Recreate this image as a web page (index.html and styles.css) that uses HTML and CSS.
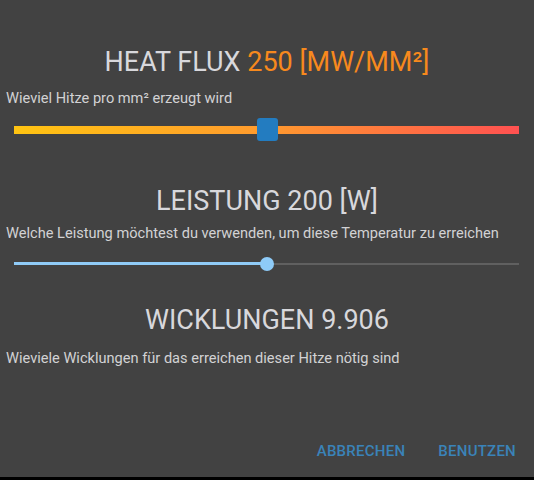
FILE: index.html
```
<!DOCTYPE html>
<html>
<head>
  <meta charset="UTF-8">
  <title>Spule berechnen</title>
  <link rel="stylesheet" href="styles.css">
</head>
<body>
  <div class="dialog">
    <div class="field field-flux">
      <h2 class="field-title">HEAT FLUX <span class="accent">250 [MW/MM²]</span></h2>
      <p class="field-hint">Wieviel Hitze pro mm² erzeugt wird</p>
      <div class="slider slider-heat">
        <div class="slider-track"></div>
        <div class="slider-thumb" style="left: 50%"></div>
      </div>
    </div>

    <div class="field field-power">
      <h2 class="field-title">LEISTUNG 200 [W]</h2>
      <p class="field-hint">Welche Leistung möchtest du verwenden, um diese Temperatur zu erreichen</p>
      <div class="slider slider-line">
        <div class="slider-track"></div>
        <div class="slider-fill" style="width: 50%"></div>
        <div class="slider-thumb" style="left: 50%"></div>
      </div>
    </div>

    <div class="field field-coils">
      <h2 class="field-title">WICKLUNGEN 9.906</h2>
      <p class="field-hint">Wieviele Wicklungen für das erreichen dieser Hitze nötig sind</p>
    </div>

    <div class="actions">
      <button class="action">ABBRECHEN</button>
      <button class="action">BENUTZEN</button>
    </div>
  </div>
</body>
</html>
```

FILE: styles.css
```
body {
  margin: 0;
  background-color: #000;
  font-family: Roboto, "Liberation Sans", sans-serif;
}
.dialog {
  display: flex;
  flex-direction: column;
  height: 477px;
  box-sizing: border-box;
  padding: 46px 0 16px;
  background-color: #424242;
}
.field-title {
  margin: 0;
  font-size: 27px;
  font-weight: 400;
  line-height: 32px;
  text-align: center;
  color: #d8d8dc;
}
.field-title .accent {
  color: #f7891d;
}
.field-hint {
  margin: 10px 0 0;
  padding-left: 6px;
  font-size: 14.6px;
  line-height: 20px;
  color: #d2d2d4;
}
.field-power {
  margin-top: 44px;
}
.field-power .field-hint {
  margin-top: 6px;
}
.field-coils {
  margin-top: 33px;
}
.field-coils .field-hint {
  margin-top: 12px;
}
.slider {
  position: relative;
  display: flex;
  align-items: center;
  margin: 10px 15px 0 14px;
}
.slider-heat {
  height: 23px;
}
.slider-heat .slider-track {
  flex: 1;
  height: 8px;
  background: linear-gradient(90deg, #ffc412 0%, #ff9a2e 50%, #ff5151 100%);
}
.slider-heat .slider-thumb {
  position: absolute;
  top: 0;
  width: 21px;
  height: 23px;
  margin-left: -10px;
  border-radius: 3px;
  background-color: #237cc0;
}
.slider-line {
  height: 14px;
  margin-top: 14px;
}
.slider-line .slider-track {
  flex: 1;
  height: 2px;
  background-color: #606060;
}
.slider-line .slider-fill {
  position: absolute;
  left: 0;
  top: 5px;
  height: 3px;
  background-color: #90cbf7;
}
.slider-line .slider-thumb {
  position: absolute;
  top: 0;
  width: 14px;
  height: 14px;
  margin-left: -7px;
  border-radius: 50%;
  background-color: #8ecbf8;
}
.actions {
  display: flex;
  justify-content: flex-end;
  gap: 33px;
  margin-top: auto;
  padding-right: 18px;
}
.action {
  padding: 0;
  border: none;
  background: none;
  font-family: Roboto, "Liberation Sans", sans-serif;
  font-size: 15px;
  font-weight: 500;
  line-height: 20px;
  letter-spacing: 0.25px;
  color: #3a83b8;
  cursor: pointer;
}
```
